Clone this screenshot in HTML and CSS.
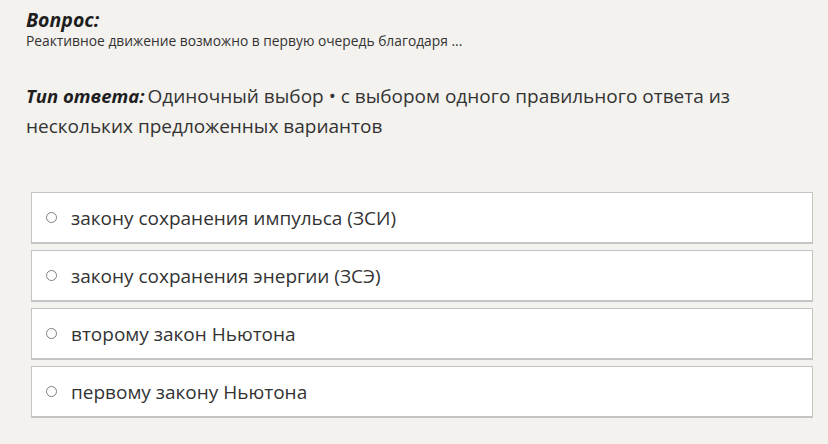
FILE: index.html
```html
<!DOCTYPE html>
<html lang="ru">
<head>
<meta charset="utf-8">
<link rel="stylesheet" href="styles.css">
</head>
<body>
<div class="page">
  <section class="question">
    <h2 class="label">Вопрос:</h2>
    <p class="qtext">Реактивное движение возможно в первую очередь благодаря ...</p>
  </section>
  <section class="type">
    <p class="type-text"><span class="type-label">Тип ответа:</span><span class="type-value">Одиночный выбор • с выбором одного правильного ответа из</span> <span class="type-value">нескольких предложенных вариантов</span></p>
  </section>
  <ul class="options">
    <li class="option"><span class="radio"></span><span class="opt-text">закону сохранения импульса (ЗСИ)</span></li>
    <li class="option"><span class="radio"></span><span class="opt-text">закону сохранения энергии (ЗСЭ)</span></li>
    <li class="option"><span class="radio"></span><span class="opt-text">второму закон Ньютона</span></li>
    <li class="option"><span class="radio"></span><span class="opt-text">первому закону Ньютона</span></li>
  </ul>
</div>
</body>
</html>
```
FILE: styles.css
```css
html, body {
  margin: 0;
  padding: 0;
  background: #f3f2ef;
}
body {
  font-family: "Open Sans", "Noto Sans", sans-serif;
  color: #333;
}
.page {
  padding: 7px 15px 0 26px;
}
.label {
  margin: 0;
  font-size: 19.5px;
  font-weight: 700;
  font-style: italic;
  line-height: 25px;
  color: #1e1e1e;
}
.qtext {
  margin: 0;
  font-size: 13.8px;
  line-height: 18px;
  color: #333;
}
.type {
  margin-top: 31px;
}
.type-text {
  margin: 0;
  font-size: 19px;
  line-height: 30px;
  color: #333;
  padding-right: 60px;
}
.type-label {
  font-size: 18.5px;
  font-weight: 700;
  font-style: italic;
  color: #1e1e1e;
  margin-right: 3px;
}
.options {
  list-style: none;
  margin: 51px 0 0 5px;
  padding: 0;
  display: flex;
  flex-direction: column;
  gap: 6px;
}
.option {
  height: 49px;
  background: #fff;
  border: 1px solid #c4c4c4;
  border-bottom: 2px solid #c4c4c4;
  display: flex;
  align-items: center;
  padding-left: 14px;
  font-size: 19px;
  color: #333;
}
.radio {
  width: 9px;
  height: 9px;
  border: 1px solid #7e7e7e;
  border-radius: 50%;
  margin-right: 14px;
  flex: none;
}
```
